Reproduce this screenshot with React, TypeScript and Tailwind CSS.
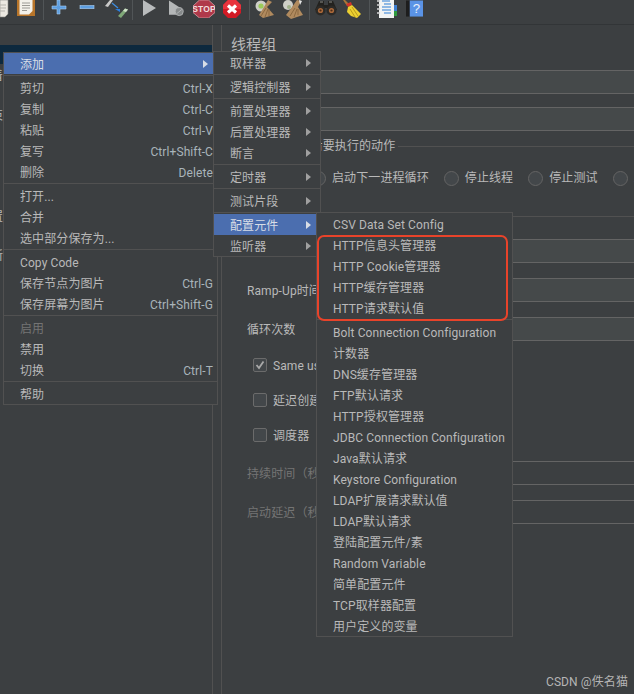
import React from 'react'

const FONT = 'font-["Roboto","Noto_Sans_CJK_SC",sans-serif]'

function MenuRow({ label, shortcut, arrow, active, disabled }: {
  label: string
  shortcut?: string
  arrow?: boolean
  active?: boolean
  disabled?: boolean
}) {
  return (
    <div className={`flex items-center h-[21px] pl-4 pr-0 pt-[2px] whitespace-nowrap ${active ? 'bg-[#4b6eaf] text-[#d8dde6]' : disabled ? 'text-[#747474]' : 'text-[#b9b9b9]'}`}>
      <span className="flex-1">{label}</span>
      {shortcut && <span className="text-[#a9b4ba] pr-[4px]">{shortcut}</span>}
      {arrow && <span className={`mr-[9px] -mt-[2px] w-0 h-0 border-y-[4px] border-y-transparent border-l-[5px] ${active ? 'border-l-[#d8dde6]' : 'border-l-[#a0a0a0]'}`} />}
    </div>
  )
}

function Sep() {
  return <div className="h-[3px] flex items-center"><div className="h-px w-full bg-[#515151]" /></div>
}

function ToolSep({ className }: { className: string }) {
  return <div className={`w-px h-[20px] bg-[#515557] shrink-0 ${className}`} />
}

function Field() {
  return <div className="h-[24px] ml-[80px] border-y border-[#646464] bg-[#45494a]" />
}

function FormRow({ label, dim, plain, className }: { label: string; dim?: boolean; plain?: boolean; className?: string }) {
  return (
    <div className={`flex items-center h-[24px] ${className || ''}`}>
      <span className={`w-[103px] pl-[25px] pt-[2px] shrink-0 whitespace-nowrap ${dim ? 'text-[#747474]' : ''}`}>{label}</span>
      <div className={`flex-1 h-full border-y border-[#646464] ${plain ? '' : 'bg-[#45494a]'}`} />
    </div>
  )
}

function Radio({ label, className }: { label: string; className?: string }) {
  return (
    <div className={`flex items-center gap-[6px] shrink-0 ${className || ''}`}>
      <span className="w-[15px] h-[15px] rounded-full border border-[#646464] bg-[#43474a]" />
      <span className="whitespace-nowrap">{label}</span>
    </div>
  )
}

function Check({ label, checked, className }: { label: string; checked?: boolean; className?: string }) {
  return (
    <div className={`flex items-center h-[20px] pl-[31px] gap-[6px] ${className || ''}`}>
      <span className="w-[14px] h-[14px] rounded-[2px] border border-[#6b6b6b] bg-[#43474a] flex items-center justify-center">
        {checked && (
          <svg width="10" height="10" viewBox="0 0 10 10">
            <path d="M1.5 5 L4 8 L8.5 1.5" fill="none" stroke="#a9a9a9" strokeWidth="1.8" />
          </svg>
        )}
      </span>
      <span className="whitespace-nowrap pt-[1px]">{label}</span>
    </div>
  )
}

function ToolIcons() {
  return (
    <div className="flex items-start h-[24px] overflow-hidden">
      {/* partial document */}
      <svg width="9" height="18" viewBox="0 0 9 18" className="shrink-0">
        <path d="M0 0H8V14L5 17H0Z" fill="#ece9e2" stroke="#8b8b86" strokeWidth="0.6" />
        <path d="M0 5H6M0 8H6M0 11H5" stroke="#b5b3ad" />
      </svg>
      <svg width="18" height="17" viewBox="0 0 18 17" className="shrink-0 ml-[8px]">
        <rect x="0" y="-1" width="18" height="17" fill="#b8752a" />
        <path d="M2.5 0H15.5V11L12 14.5H2.5Z" fill="#f3f1ea" />
        <path d="M5 3H13M5 5.5H13M5 8H13M5 10.5H10" stroke="#9b9a94" />
      </svg>
      <ToolSep className="ml-[8px]" />
      <svg width="16" height="16" viewBox="0 0 16 16" className="shrink-0 ml-[7px]">
        <path d="M6 0H9V6H15V9H9V14H6V9H1V6H6Z" fill="#5d9ee0" stroke="#a9cdf2" strokeWidth="0.6" />
      </svg>
      <svg width="16" height="16" viewBox="0 0 16 16" className="shrink-0 ml-[12px]">
        <rect x="1" y="5.5" width="14" height="3.2" fill="#5d9ee0" stroke="#a9cdf2" strokeWidth="0.6" />
      </svg>
      <svg width="23" height="19" viewBox="0 0 23 19" className="shrink-0 ml-[10px]">
        <path d="M0 6L5 0H8L3 7Z" fill="#c9c9c9" />
        <path d="M7 3L13 8" stroke="#3f8ee0" strokeWidth="1.2" />
        <path d="M10 9H15V12L10 9" fill="#2a7fe0" />
        <path d="M13 16L20 8.5L23 9.5L16 18Z" fill="#7fa878" />
        <path d="M18 11L20 8.5L23 9.5L21 12Z" fill="#cfe0c8" />
      </svg>
      <ToolSep className="ml-[4px]" />
      <svg width="13" height="17" viewBox="0 0 13 17" className="shrink-0 ml-[10px]">
        <path d="M0 0L13 8L0 16Z" fill="#b9bcbd" />
      </svg>
      <svg width="16" height="17" viewBox="0 0 18 18" className="shrink-0 ml-[13px]">
        <path d="M0 0L13 8.5L8 16H0Z" fill="#b4b7b8" />
        <circle cx="11.5" cy="12.5" r="4.5" fill="#85898a" stroke="#b4b7b8" />
        <path d="M8.5 15L14.5 10" stroke="#b4b7b8" />
      </svg>
      <svg width="22" height="18" viewBox="0 0 22 18" className="shrink-0 ml-[8px]">
        <path d="M6.5 0H15.5L22 6V12.5L15.5 18H6.5L0 12.5V6Z" fill="#b0394a" stroke="#d9a0a6" strokeWidth="0.8" />
        <text x="11" y="12" textAnchor="middle" fontSize="8.5" fontWeight="700" fill="#f0dede" fontFamily="Liberation Sans, sans-serif">STOP</text>
      </svg>
      <svg width="18" height="18" viewBox="0 0 18 18" className="shrink-0 ml-[8px]">
        <path d="M5 0H13L18 5V13L13 18H5L0 13V5Z" fill="#d21a25" />
        <path d="M0 9V5L5 0H13L18 5V9Z" fill="#e8333c" />
        <path d="M5 5.5L13 12.5M13 5.5L5 12.5" stroke="#fff" strokeWidth="3.2" />
      </svg>
      <ToolSep className="ml-[8px]" />
      <svg width="19" height="18" viewBox="0 0 19 18" className="shrink-0 ml-[5px]">
        <circle cx="6" cy="6" r="5.5" fill="#cfcfc8" />
        <circle cx="6" cy="6" r="2.6" fill="#9ccb5a" />
        <path d="M13 0L17 2L12 7L19 15L8 18L4 15L9 7Z" fill="#b08a5e" />
        <path d="M6 16L11 8M10 17L13 9M14 16L14 9" stroke="#8a6840" />
      </svg>
      <svg width="20" height="19" viewBox="0 0 20 19" className="shrink-0 ml-[9px]">
        <circle cx="5" cy="5" r="5" fill="#cfcfc8" />
        <circle cx="6" cy="7" r="2" fill="#9fb08a" />
        <path d="M14 0L18 1L15 7L20 15L8 19L3 15L9 7Z" fill="#b08a5e" />
        <path d="M16 0L19 1L17 5Z" fill="#e6e6e6" />
        <path d="M7 16L12 8M11 17L14 9M15 15L15 9" stroke="#8a6840" />
      </svg>
      <ToolSep className="ml-[6px]" />
      <svg width="22" height="15" viewBox="0 0 22 15" className="shrink-0 ml-[5px] mt-[1px]">
        <path d="M4 0H9V4H13V0H18L22 9H13V7H9V9H0Z" fill="#23221f" />
        <path d="M5 1H8M14 1H17" stroke="#8a8a86" />
        <circle cx="5.5" cy="9.5" r="5" fill="#2c2a27" />
        <circle cx="16.5" cy="9.5" r="5" fill="#2c2a27" />
        <circle cx="5.5" cy="9.5" r="2.6" fill="#a9683a" />
        <circle cx="16.5" cy="9.5" r="2.6" fill="#a9683a" />
        <circle cx="5.5" cy="9.5" r="1.1" fill="#4a2c18" />
        <circle cx="16.5" cy="9.5" r="1.1" fill="#4a2c18" />
      </svg>
      <svg width="20" height="19" viewBox="0 0 20 19" className="shrink-0 ml-[5px]">
        <path d="M1 0L3 0L7 4L5 6Z" fill="#a87838" />
        <path d="M4 4L9 2L10 5L6 7Z" fill="#d1342a" />
        <path d="M6 7L10 5L19 14L15 18L9 16L5 12Z" fill="#ecd031" />
        <path d="M8 9L13 17M10 7L16 16" stroke="#b89a1c" />
      </svg>
      <ToolSep className="ml-[7px]" />
      <svg width="20" height="19" viewBox="0 0 20 19" className="shrink-0 ml-[7px]">
        <rect x="2" y="-1" width="15" height="19" fill="#f2f3f3" />
        <path d="M0 1H3M0 5H3M0 9H3M0 13H3" stroke="#d5d5d5" strokeWidth="1.5" />
        <path d="M5 1H13M7 4H14M5 7H14M5 10H14M7 13H14" stroke="#2d7ed6" strokeWidth="1.2" />
        <rect x="17" y="5" width="3" height="6" fill="#3f7fd0" />
        <rect x="17" y="11" width="3" height="5" fill="#2f9a3f" />
      </svg>
      <svg width="17" height="18" viewBox="0 0 18 18" className="shrink-0 ml-[9px]">
        <rect x="0" y="0" width="4" height="17" fill="#1d1d1d" />
        <rect x="4" y="0" width="14" height="17" fill="#5a93e6" />
        <text x="11" y="13" textAnchor="middle" fontSize="14" fill="#e8f0fb" fontFamily="Liberation Sans, sans-serif">?</text>
      </svg>
    </div>
  )
}

const CONFIG_TOP = ['CSV Data Set Config', 'HTTP信息头管理器', 'HTTP Cookie管理器', 'HTTP缓存管理器', 'HTTP请求默认值']
const CONFIG_REST = ['Bolt Connection Configuration', '计数器', 'DNS缓存管理器', 'FTP默认请求', 'HTTP授权管理器',
  'JDBC Connection Configuration', 'Java默认请求', 'Keystore Configuration', 'LDAP扩展请求默认值', 'LDAP默认请求',
  '登陆配置元件/素', 'Random Variable', '简单配置元件', 'TCP取样器配置', '用户定义的变量']

export default function App() {
  return (
    <div className={`relative w-[634px] h-[694px] overflow-hidden bg-[#3c3f41] text-[12px] leading-[16px] tracking-[0.1px] text-[#b9b9b9] ${FONT}`}>
      <div className="h-[25px] border-b border-[#323537]">
        <ToolIcons />
      </div>

      <div className="flex h-[669px]">
        {/* tree */}
        <div className="w-[213px] shrink-0 border-r border-[#515151] pt-[20px] overflow-hidden">
          <div className="h-[19px] bg-[#0d293e]" />
          <div className="-ml-[9px] flex flex-col leading-[21px]">
            <span className="mt-[2px]">着</span>
            <span className="mt-[19px]">束</span>
            <span className="mt-[80px]">置</span>
            <span className="mt-[18px]">新</span>
          </div>
        </div>

        {/* thread group form */}
        <div className="flex-1 ml-[8px] border-l border-[#515151] min-w-0">
          <div className="pl-[9px] mt-[10px] text-[15px] leading-[20px]">线程组</div>
          <div className="mt-[15px]"><Field /></div>
          <div className="mt-[13px]"><Field /></div>

          <div className="mt-[7px] ml-[16px] h-[16px] flex items-center gap-[3px]">
            <span className="whitespace-nowrap">在取样器错误后要执行的动作</span>
            <div className="flex-1 h-px bg-[#515151]" />
          </div>
          <div className="mt-[14px] ml-[89px] h-[20px] flex items-center">
            <Radio label="启动下一进程循环" />
            <Radio label="停止线程" className="ml-[15px]" />
            <Radio label="停止测试" className="ml-[15px]" />
            <Radio label="立即停止测试线程" className="ml-[15px]" />
          </div>

          <div className="mt-[20px] ml-[16px] h-[16px] flex items-center gap-[3px]">
            <span className="whitespace-nowrap">线程属性</span>
            <div className="flex-1 h-px bg-[#515151]" />
          </div>

          <FormRow label="线程数：" className="mt-[15px]" />
          <FormRow label="Ramp-Up时间（秒）：" className="mt-[15px]" />
          <FormRow label="循环次数" className="mt-[15px]" />
          <Check label="Same user on each iteration" checked className="mt-[14px]" />
          <Check label="延迟创建线程直到需要" className="mt-[15px]" />
          <Check label="调度器" className="mt-[15px]" />
          <FormRow label="持续时间（秒）" dim plain className="mt-[16px]" />
          <FormRow label="启动延迟（秒）" dim plain className="mt-[15px]" />
        </div>
      </div>

      {/* context menu */}
      <div className="absolute left-[3px] top-[52px] w-[215px] border border-[#515151] bg-[#3c3f41]">
        <MenuRow label="添加" arrow active />
        <Sep />
        <MenuRow label="剪切" shortcut="Ctrl-X" />
        <MenuRow label="复制" shortcut="Ctrl-C" />
        <MenuRow label="粘贴" shortcut="Ctrl-V" />
        <MenuRow label="复写" shortcut="Ctrl+Shift-C" />
        <MenuRow label="删除" shortcut="Delete" />
        <Sep />
        <MenuRow label="打开..." />
        <MenuRow label="合并" />
        <MenuRow label="选中部分保存为..." />
        <Sep />
        <MenuRow label="Copy Code" />
        <MenuRow label="保存节点为图片" shortcut="Ctrl-G" />
        <MenuRow label="保存屏幕为图片" shortcut="Ctrl+Shift-G" />
        <Sep />
        <MenuRow label="启用" disabled />
        <MenuRow label="禁用" />
        <MenuRow label="切换" shortcut="Ctrl-T" />
        <Sep />
        <MenuRow label="帮助" />
      </div>

      {/* add submenu */}
      <div className="absolute left-[213px] top-[51px] w-[108px] border border-[#515151] bg-[#3c3f41]">
        <MenuRow label="取样器" arrow />
        <Sep />
        <MenuRow label="逻辑控制器" arrow />
        <Sep />
        <MenuRow label="前置处理器" arrow />
        <MenuRow label="后置处理器" arrow />
        <MenuRow label="断言" arrow />
        <Sep />
        <MenuRow label="定时器" arrow />
        <Sep />
        <MenuRow label="测试片段" arrow />
        <Sep />
        <MenuRow label="配置元件" arrow active />
        <MenuRow label="监听器" arrow />
      </div>

      {/* config element submenu */}
      <div className="absolute left-[316px] top-[212px] w-[197px] border border-[#515151] bg-[#3c3f41] flex flex-col">
        {CONFIG_TOP.map((t) => <MenuRow key={t} label={t} />)}
        <Sep />
        {CONFIG_REST.map((t) => <MenuRow key={t} label={t} />)}
      </div>

      {/* red annotation */}
      <div className="absolute left-[317px] top-[235px] w-[191px] h-[86px] rounded-[7px] border-2 border-[#e8432a]" />

      <div className="absolute right-[6px] bottom-[4px] text-[12px] leading-[16px] text-[#b5b5b5]">CSDN @佚名猫</div>
    </div>
  )
}
